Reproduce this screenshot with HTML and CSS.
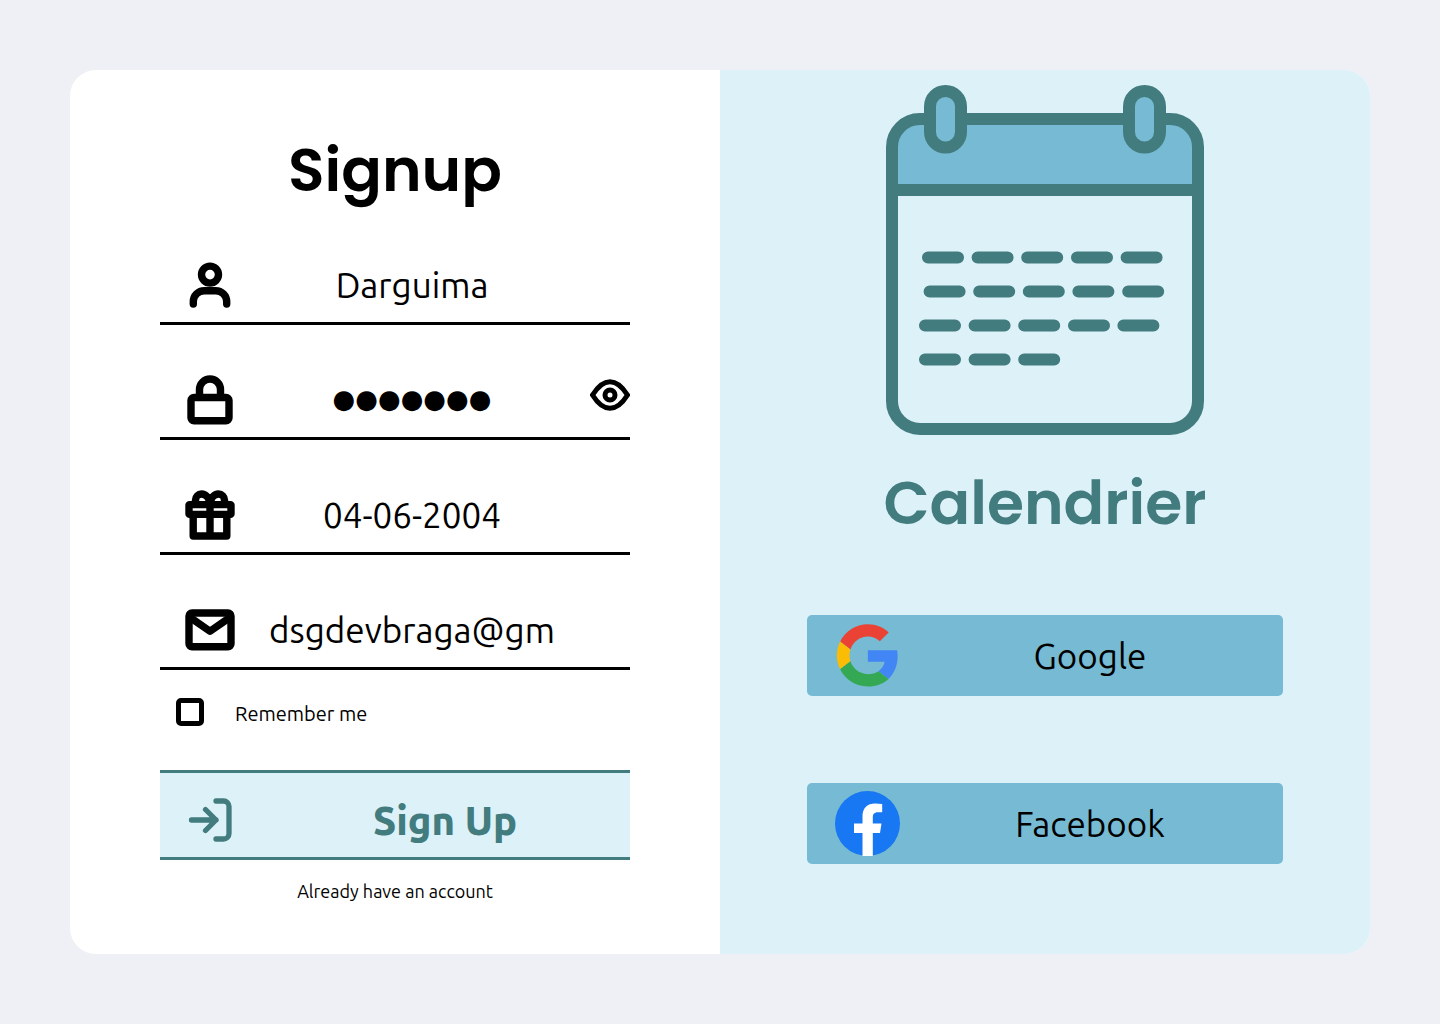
FILE: index.html
```html
<!DOCTYPE html>
<html lang="en">
<head>
<meta charset="utf-8">
<meta name="viewport" content="width=device-width, initial-scale=1">
<title>Calendrier - Signup</title>
<link rel="stylesheet" href="styles.css">
</head>
<body>
<main class="card">
  <section class="panel signup">
    <h1 class="title">Signup</h1>
    <form class="form">
      <div class="fields">
        <div class="field">
          <label class="field-icon" for="username" aria-label="Username">
            <svg class="icon" viewBox="0 0 60 60" stroke-width="7.4">
              <circle cx="30" cy="19.6" r="8.5"/>
              <path d="M13.3 49v-2.3a11 11 0 0 1 11-11h11.4a11 11 0 0 1 11 11V49"/>
            </svg>
          </label>
          <input class="input" id="username" type="text" value="Darguima">
        </div>
        <div class="field">
          <label class="field-icon" for="password" aria-label="Password">
            <svg class="icon" viewBox="0 0 60 60" stroke-width="7.4">
              <rect x="11" y="27.5" width="38" height="23.3" rx="3"/>
              <path d="M19.5 27v-7.5a10.5 10.5 0 0 1 21 0V27"/>
            </svg>
          </label>
          <input class="input input-password" id="password" type="text" autocomplete="off" value="●●●●●●●">
          <button class="reveal" type="button" aria-label="Show password">
            <svg class="eye" viewBox="0 0 40 32" stroke-width="5">
              <path d="M2.5 16C7.5 8 13.3 2.700 20 2.700S32.500 8 37.500 16C32.500 24 26.700 29.300 20 29.300S7.500 24 2.500 16z"/>
              <circle cx="20" cy="16" r="5"/>
            </svg>
          </button>
        </div>
        <div class="field">
          <label class="field-icon" for="birthday" aria-label="Birthday">
            <svg class="icon" viewBox="0 0 60 60" stroke-width="7.4">
              <rect x="9" y="19.600" width="42" height="9.800" rx="0.500"/>
              <path d="M13.200 31v20h33.600V31M30 19v32"/>
              <path d="M30 18c-1-5-4-9-8.500-9a6 6 0 0 0-6 6v4M30 18c1-5 4-9 8.500-9a6 6 0 0 1 6 6v4"/>
            </svg>
          </label>
          <input class="input" id="birthday" type="text" value="04-06-2004">
        </div>
        <div class="field">
          <label class="field-icon" for="email" aria-label="Email">
            <svg class="icon" viewBox="0 0 60 60" stroke-width="7.4">
              <rect x="9" y="13" width="42" height="33.800" rx="3"/>
              <path d="M10 17.400l20 13.800 20-13.800"/>
            </svg>
          </label>
          <input class="input" id="email" type="text" value="dsgdevbraga@gm">
        </div>
      </div>
      <div class="remember">
        <input class="checkbox" id="remember" type="checkbox">
        <label class="remember-label" for="remember">Remember me</label>
      </div>
      <button class="submit" type="submit">
        <svg class="icon" viewBox="0 0 60 60" stroke-width="5.3">
          <path d="M11.500 30H36M25.500 19.500L36 30 25.500 40.500"/>
          <path d="M36 11h7.500a5.500 5.500 0 0 1 5.500 5.500v27a5.500 5.500 0 0 1-5.500 5.500H36"/>
        </svg>
        <span class="button-label">Sign Up</span>
      </button>
    </form>
    <a class="login-link" href="#login">Already have an account</a>
  </section>
  <section class="panel brand">
    <svg class="calendar" viewBox="0 0 318 350" role="img" aria-label="Calendar">
      <path class="band" d="M6 105V61a27 27 0 0 1 27-27h252a27 27 0 0 1 27 27v44z"/>
      <rect class="line" x="6" y="34" width="306" height="310" rx="28"/>
      <path class="line" d="M6 105h306"/>
      <rect class="line band" x="44" y="6" width="31" height="56.500" rx="15.500"/>
      <rect class="line band" x="243" y="6" width="31" height="56.500" rx="15.500"/>
      <g class="days">
        <path d="M42 172.500h30M91.600 172.500h30M141.200 172.500h30M191 172.500h30M240.600 172.500h30"/>
        <path d="M43.600 206.500h30M93.200 206.500h30M142.800 206.500h30M192.400 206.500h30M242.200 206.500h30"/>
        <path d="M39 240.600h30M88.600 240.600h30M138.200 240.600h30M188 240.600h30M237.400 240.600h30"/>
        <path d="M39 274.500h30M88.600 274.500h30M138.200 274.500h30"/>
      </g>
    </svg>
    <h2 class="title brand-title">Calendrier</h2>
    <div class="providers">
      <button class="provider" type="button">
        <svg class="logo" viewBox="-1.400 -1 50.200 50.200">
          <path fill="#ea4335" d="M24 9.500c3.540 0 6.710 1.220 9.210 3.600l6.850-6.850C35.900 2.380 30.470 0 24 0 14.620 0 6.510 5.380 2.560 13.220l7.980 6.190C12.430 13.720 17.740 9.500 24 9.500z"/>
          <path fill="#4285f4" d="M46.980 24.550c0-1.570-.15-3.090-.38-4.550H24v9.020h12.940c-.58 2.960-2.260 5.480-4.780 7.180l7.730 6c4.510-4.180 7.090-10.360 7.090-17.650z"/>
          <path fill="#fbbc05" d="M10.530 28.590c-.48-1.450-.76-2.990-.76-4.590s.27-3.140.76-4.590l-7.980-6.190C.92 16.460 0 20.120 0 24c0 3.880.92 7.540 2.560 10.780l7.970-6.190z"/>
          <path fill="#34a853" d="M24 48c6.480 0 11.930-2.130 15.890-5.810l-7.730-6c-2.150 1.450-4.920 2.300-8.160 2.300-6.260 0-11.570-4.220-13.470-9.910l-7.980 6.190C6.510 42.620 14.620 48 24 48z"/>
        </svg>
        <span class="button-label">Google</span>
      </button>
      <button class="provider" type="button">
        <svg class="logo" viewBox="0 0 65 65">
          <circle cx="32.500" cy="32.500" r="32.500" fill="#1877f2"/>
          <path fill="#fff" d="M27.500 65V42H19v-9.500h8.500V25c0-8.300 5-12.600 12.500-12.600 2.500 0 5 .2 7.200.6v8.200h-4.200c-4.200 0-5.200 2.400-5.200 5.300v6H46.500L45 42h-7.200v23z"/>
        </svg>
        <span class="button-label">Facebook</span>
      </button>
    </div>
  </section>
</main>
</body>
</html>
```
FILE: styles.css
```css
* { box-sizing: border-box; }

body {
  margin: 0;
  padding: 70px;
  background: #eff0f6;
  color: #000;
  font-family: "Ubuntu Sans", Ubuntu, "Noto Sans", sans-serif;
  font-weight: 450;
}

button, input {
  margin: 0;
  padding: 0;
  border: 0;
  border-radius: 0;
  background: none;
  color: inherit;
  font: inherit;
}

button { cursor: pointer; }
svg { display: block; }

.card {
  display: grid;
  grid-template-columns: 1fr 1fr;
  border-radius: 26px;
  overflow: hidden;
  background: #fff;
}

.panel {
  display: flex;
  flex-direction: column;
}

.signup { padding: 55px 90px 49px; }

.title {
  margin: 0;
  text-align: center;
  font-family: Poppins, Inter, sans-serif;
  font-size: 60px;
  font-weight: 600;
  line-height: 90px;
}

.form {
  display: flex;
  flex-direction: column;
  margin-top: 30px;
}

.fields {
  display: grid;
  gap: 35px;
}

.field {
  display: grid;
  grid-template-columns: 60px 1fr 46px;
  column-gap: 28px;
  align-items: center;
  height: 80px;
  padding: 3px 0 0 20px;
  border-bottom: 3px solid #000;
}

.icon {
  width: 60px;
  height: 60px;
  fill: none;
  stroke: currentColor;
  stroke-linecap: round;
  stroke-linejoin: round;
}

.input {
  width: 100%;
  height: 60px;
  padding-top: 2px;
  text-align: center;
  font-size: 35px;
  outline: 0;
}

.input-password {
  padding: 0 0 2px;
  font-family: "DejaVu Sans", sans-serif;
  font-size: 26px;
  font-weight: 400;
}

.reveal {
  display: flex;
  align-items: center;
  align-self: start;
  justify-self: end;
  height: 64px;
}

.eye {
  width: 40px;
  height: 32px;
  fill: none;
  stroke: currentColor;
}

.remember {
  display: flex;
  align-items: center;
  gap: 31px;
  margin-top: 24px;
  padding-left: 16px;
  font-size: 20px;
  line-height: 32px;
}

.remember-label { padding-top: 4px; }

.checkbox {
  appearance: none;
  width: 28px;
  height: 28px;
  border: 5px solid #000;
  border-radius: 5px;
}

.checkbox:checked { background: #427c7e; }

.submit {
  display: grid;
  grid-template-columns: 60px 1fr;
  column-gap: 20px;
  align-items: center;
  height: 90px;
  margin-top: 40px;
  padding: 10px 0 0 20px;
  border-top: 3px solid #427c7e;
  border-bottom: 3px solid #427c7e;
  background: #ddf1f9;
  color: #427c7e;
  font-size: 40px;
  font-weight: 800;
}

.button-label { padding-top: 2px; }

.login-link {
  align-self: center;
  margin-top: 20px;
  color: inherit;
  font-size: 18px;
  line-height: 24px;
  text-decoration: none;
}

.brand {
  align-items: center;
  padding: 15px 87px 90px;
  background: #ddf1f9;
}

.calendar {
  width: 318px;
  height: 350px;
}

.line {
  fill: none;
  stroke: #427c7e;
  stroke-width: 12;
}

.band { fill: #76bbd3; }

.days {
  stroke: #427c7e;
  stroke-width: 12;
  stroke-linecap: round;
}

.brand-title {
  margin-top: 23px;
  color: #427c7e;
}

.providers {
  display: grid;
  gap: 87px;
  width: 100%;
  margin-top: 67px;
}

.provider {
  display: grid;
  grid-template-columns: 65px 1fr;
  align-items: center;
  height: 81px;
  padding: 0 3px 0 28px;
  border-radius: 5px;
  background: #76bbd3;
  font-size: 35px;
}

.logo {
  width: 65px;
  height: 65px;
}
```
